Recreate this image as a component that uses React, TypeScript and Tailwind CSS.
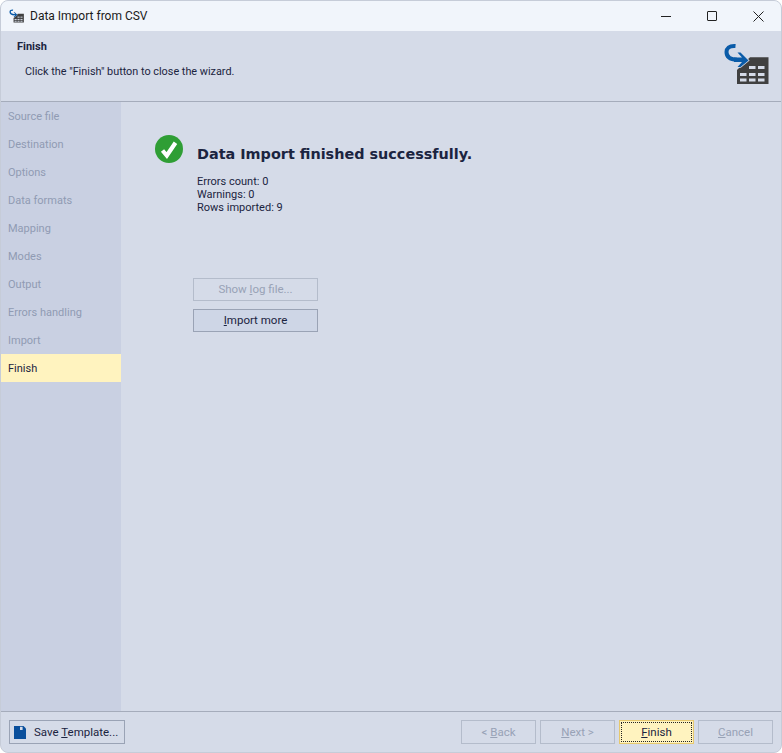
const steps = [
  "Source file",
  "Destination",
  "Options",
  "Data formats",
  "Mapping",
  "Modes",
  "Output",
  "Errors handling",
  "Import",
  "Finish",
];

function WizardIcon({ small = false }: { small?: boolean }) {
  return (
    <svg viewBox="0 0 52 48" className={small ? "w-[17px] h-[16px]" : "w-[52px] h-[48px]"}>
      <path d="M17 44 V30 L30 17.3 H48.5 V44 Z" fill="#404040" />
      <g fill="#d5dbe8">
        <rect x="20" y="33" width="6.5" height="3" />
        <rect x="29" y="33" width="6.5" height="3" />
        <rect x="38" y="33" width="6.5" height="3" />
        <rect x="20" y="38.5" width="6.5" height="3" />
        <rect x="29" y="38.5" width="6.5" height="3" />
        <rect x="38" y="38.5" width="6.5" height="3" />
        <rect x="29" y="26" width="6.5" height="3" />
        <rect x="38" y="26" width="6.5" height="3" />
      </g>
      <path d="M20.5 12.5 L28.5 20.5 L20.5 27 L17.5 27 L22 22 L14 22 L14 17.5 L22 17.5 L17.5 12.5 Z" fill="#0a5ba8" stroke="#d5dbe8" strokeWidth="1.5" paintOrder="stroke" />
      <path d="M15.5 6 C9 5.5 6.5 8.5 6.5 12 C6.5 16.5 10 19.5 17 19.8" fill="none" stroke="#0a5ba8" strokeWidth="4" />
    </svg>
  );
}

function FooterButton({ label, hot, disabled, primary }: { label: string; hot: number; disabled?: boolean; primary?: boolean }) {
  return (
    <button
      className={`w-[75px] h-[24px] pt-[1px] text-[11.5px] border flex items-center justify-center ${
        primary
          ? "bg-[#fff3bf] border-[#e6c86e] text-[#1b2440] outline-1 outline-dotted outline-[#222] -outline-offset-3"
          : disabled
          ? "border-[#b4bccb] text-[#98a2b6]"
          : "border-[#9aa3b5] text-[#1b2440]"
      }`}
    >
      <span>
        {label.slice(0, hot)}
        <span className="underline">{label[hot]}</span>
        {label.slice(hot + 1)}
      </span>
    </button>
  );
}

export default function App() {
  return (
    <div
      className="w-[782px] h-[753px] flex flex-col overflow-hidden bg-[#d5dbe8] border border-[#c6ccd8] rounded-[8px] text-[#1b2440]"
      style={{ fontFamily: 'Roboto, "Noto Sans", sans-serif' }}
    >
      {/* Title bar */}
      <div className="h-[30px] shrink-0 bg-[#f1f5fb] flex items-center">
        <div className="ml-[7px] mr-[5px] flex">
          <WizardIcon small />
        </div>
        <span className="text-[12px] text-[#1a1a1a]">Data Import from CSV</span>
        <div className="ml-auto flex items-center">
          <div className="w-[46px] h-[30px] flex items-center justify-center">
            <div className="w-[10px] h-px bg-[#222]" />
          </div>
          <div className="w-[46px] h-[30px] flex items-center justify-center">
            <div className="w-[10px] h-[10px] border border-[#222] rounded-[1px]" />
          </div>
          <div className="w-[46px] h-[30px] flex items-center justify-center">
            <svg viewBox="0 0 11 11" className="w-[11px] h-[11px]">
              <path d="M0.5 0.5 L10.5 10.5 M10.5 0.5 L0.5 10.5" stroke="#222" strokeWidth="1" />
            </svg>
          </div>
        </div>
      </div>

      {/* Header */}
      <div className="h-[71px] shrink-0 border-b border-[#a5acbb] flex justify-between pl-[16px] pr-[9px]">
        <div>
          <div className="mt-[8px] text-[11px] font-bold leading-[16px]">Finish</div>
          <div className="mt-[9px] ml-[8px] text-[10.85px] leading-[16px]">Click the "Finish" button to close the wizard.</div>
        </div>
        <div className="mt-[9px]">
          <WizardIcon />
        </div>
      </div>

      {/* Body */}
      <div className="flex-1 flex min-h-0">
        <div className="w-[120px] shrink-0 bg-[#c9d0e2]">
          {steps.map((s) => (
            <div
              key={s}
              className={`h-[28px] flex items-center pl-[7px] pt-[2px] text-[11px] ${
                s === "Finish" ? "bg-[#fff3bf] text-[#1b2440]" : "text-[#909bb3]"
              }`}
            >
              {s}
            </div>
          ))}
        </div>
        <div className="flex-1 pl-[76px]">
          <div className="relative mt-[41px]">
            <div className="absolute -left-[42px] -top-[8px]">
              <svg viewBox="0 0 28 28" className="w-[28px] h-[28px]">
                <circle cx="14" cy="14" r="14" fill="#2f9e35" />
                <path d="M7.5 15.5 L11.8 20.5 L20.5 7.8" fill="none" stroke="#fff" strokeWidth="4.2" />
              </svg>
            </div>
            <div className="text-[14.4px] font-bold leading-[22px] text-[#1b2440] whitespace-nowrap" style={{ fontFamily: '"DejaVu Sans", sans-serif' }}>
              Data Import finished successfully.
            </div>
          </div>
          <div className="mt-[10px] text-[11px] leading-[13px]">
            <div>Errors count: 0</div>
            <div>Warnings: 0</div>
            <div>Rows imported: 9</div>
          </div>
          <div className="mt-[64px] -ml-[4px] w-[125px] flex flex-col gap-[8px] text-[11.5px]">
            <button className="h-[23px] pt-[1px] border border-[#b4bccb] text-[#98a2b6]">
              Show <span className="underline">l</span>og file...
            </button>
            <button className="h-[23px] pt-[1px] border border-[#9aa3b5] bg-[#ced6e6]">
              <span className="underline">I</span>mport more
            </button>
          </div>
        </div>
      </div>

      {/* Footer */}
      <div className="h-[41px] shrink-0 border-t border-[#a5acbb] flex items-start pt-[8px] pl-[8px] pr-[8px]">
        <button className="w-[116px] h-[24px] border border-[#9aa3b5] flex items-center pl-[4px] text-[11.5px] gap-[8px] whitespace-nowrap">
          <svg viewBox="0 0 12 13" className="w-[12px] h-[13px]">
            <path d="M0 0 H9.5 L12 2.5 V13 H0 Z" fill="#0a4f9c" />
            <rect x="6" y="0.8" width="2.6" height="3.2" fill="#d5dbe8" />
          </svg>
          <span className="pt-[1px]">
            Save <span className="underline">T</span>emplate...
          </span>
        </button>
        <div className="ml-auto flex gap-[4px]">
          <FooterButton label="< Back" hot={2} disabled />
          <FooterButton label="Next >" hot={0} disabled />
          <FooterButton label="Finish" hot={0} primary />
          <FooterButton label="Cancel" hot={0} disabled />
        </div>
      </div>
    </div>
  );
}
